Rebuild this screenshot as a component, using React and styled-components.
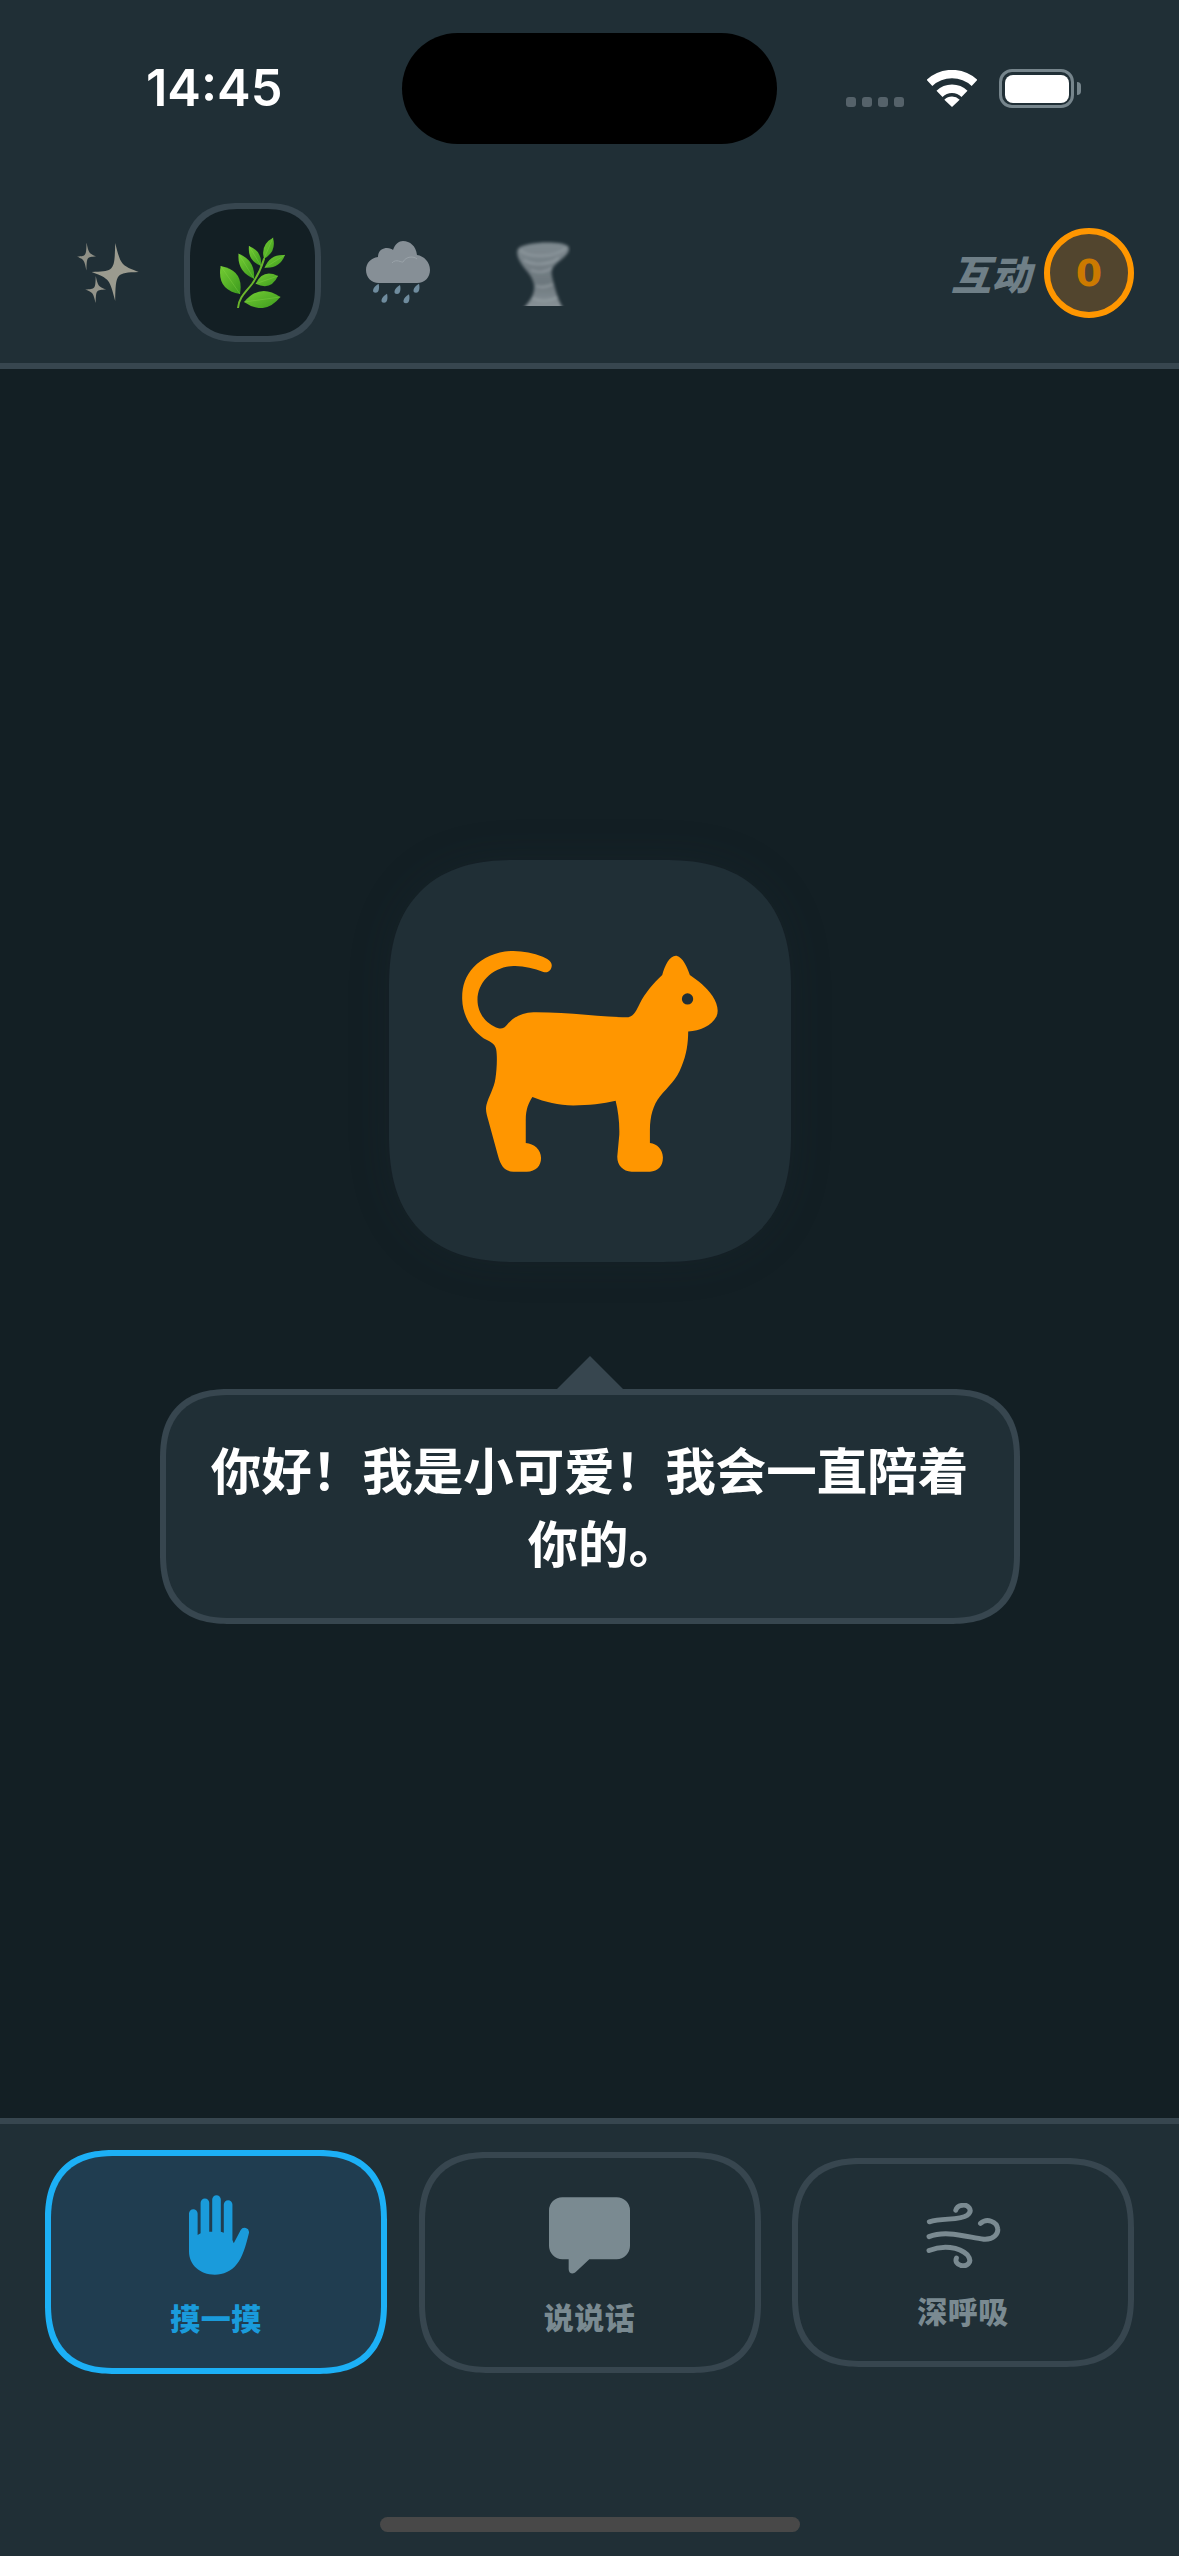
import React from "react";
import styled, { createGlobalStyle } from "styled-components";

const CJK = `"Noto Sans CJK SC", "Noto Sans", sans-serif`;

const Global = createGlobalStyle`
  html, body { margin: 0; padding: 0; background: #131f24; }
  * { box-sizing: border-box; }
`;

const Page = styled.div`
  width: 1179px;
  height: 2556px;
  display: flex;
  flex-direction: column;
  overflow: hidden;
  background: #131f24;
  font-family: ${CJK};
`;

const Header = styled.header`
  height: 369px;
  flex: none;
  background: #202f36;
  border-bottom: 6px solid #37464f;
  padding-top: 33px;
`;

const StatusBar = styled.div`
  display: grid;
  grid-template-columns: 402px 375px 1fr;
  height: 111px;
  align-items: center;
`;

const Time = styled.div`
  padding-left: 146px;
  font: 600 50.5px/1 Inter, sans-serif;
  color: #fff;
`;

const Island = styled.div`
  height: 111px;
  border-radius: 56px;
  background: #000;
`;

const StatusIcons = styled.div`
  display: flex;
  align-items: flex-start;
  padding-left: 69px;
  height: 39px;
`;

const Dots = styled.div`
  display: flex;
  gap: 6px;
  margin-top: 28px;
  margin-right: 23px;
`;

const Dot = styled.span`
  width: 10px;
  height: 10px;
  border-radius: 3px;
  background: #55626a;
`;

const Wifi = styled.svg`
  width: 50px;
  height: 37px;
  margin-top: 1px;
  margin-right: 22px;
`;

const Battery = styled.div`
  width: 75px;
  height: 39px;
  border: 3.5px solid #76858c;
  border-radius: 13px;
  padding: 2.5px;
`;

const BatteryFill = styled.div`
  width: 100%;
  height: 100%;
  border-radius: 8px;
  background: #fff;
`;

const BatteryNub = styled.div`
  width: 4px;
  height: 13px;
  margin: 13px 0 0 3px;
  border-radius: 0 5px 5px 0;
  background: #76858c;
`;

const TabRow = styled.div`
  display: flex;
  align-items: center;
  margin-top: 59px;
  padding: 0 45px 0 39px;
`;

const Tabs = styled.div`
  display: flex;
  gap: 8px;
  flex: 1;
`;

const Tab = styled.div`
  width: 137px;
  height: 139px;
  display: flex;
  align-items: center;
  justify-content: center;
  border-radius: 56px;
  corner-shape: superellipse(1.3);
  border: 6px solid ${(p) => (p.$active ? "#37464f" : "transparent")};
  background: ${(p) => (p.$active ? "#131f24" : "transparent")};
`;

const Score = styled.div`
  display: flex;
  align-items: center;
  gap: 13px;
`;

const ScoreLabel = styled.span`
  font-size: 40px;
  line-height: 48px;
  font-weight: 900;
  font-style: italic;
  color: #6f7f87;
`;

const ScoreBadge = styled.div`
  width: 90px;
  height: 90px;
  display: flex;
  align-items: center;
  justify-content: center;
  border-radius: 50%;
  border: 6.5px solid #ff9600;
  background: #52452e;
  color: #cc7a00;
  font: 700 38px/1 "DejaVu Sans", sans-serif;
`;

const Main = styled.main`
  flex: 1;
  display: flex;
  flex-direction: column;
  align-items: center;
  padding-top: 491px;
`;

const PetCard = styled.div`
  width: 402px;
  height: 402px;
  display: flex;
  align-items: center;
  justify-content: center;
  border-radius: 128px;
  corner-shape: superellipse(1.3);
  background: #202f36;
  box-shadow: 0 0 40px rgba(32, 47, 54, 0.22);
`;

const CatIcon = styled.svg`
  width: 260px;
  height: 223px;
`;

const Bubble = styled.div`
  position: relative;
  width: 860px;
  margin-top: 127px;
  padding: 37px 36px 41px;
  border: 6px solid #37464f;
  border-radius: 70px;
  corner-shape: superellipse(1.3);
  background: #202f36;
  color: #fff;
  font-size: 50.5px;
  line-height: 72.5px;
  font-weight: 700;
  text-align: center;
  &::before {
    content: "";
    position: absolute;
    left: 50%;
    top: -39px;
    margin-left: -33px;
    border-left: 33px solid transparent;
    border-right: 33px solid transparent;
    border-bottom: 33px solid #37464f;
  }
`;

const BubbleLine = styled.div`
  padding-left: ${(p) => (p.$trimmedEnd ? "0.55em" : "0")};
`;

const Footer = styled.footer`
  height: 438px;
  flex: none;
  position: relative;
  background: #202f36;
  border-top: 6px solid #37464f;
  padding: 26px 45px 0;
`;

const Actions = styled.div`
  display: grid;
  grid-template-columns: repeat(3, 342px);
  gap: 31.5px;
  align-items: center;
`;

const Action = styled.div`
  display: flex;
  flex-direction: column;
  align-items: center;
  gap: 24px;
  padding: 39px 0 33px;
  border-radius: 70px;
  corner-shape: superellipse(1.3);
  border: 6px solid ${(p) => (p.$active ? "#1cb0f6" : "#37464f")};
  background: ${(p) => (p.$active ? "#203d50" : "transparent")};
  color: ${(p) => (p.$active ? "#1a9bdb" : "#7a8a91")};
`;

const ActionIcon = styled.svg`
  display: block;
  width: ${(p) => p.$w}px;
  height: ${(p) => p.$h}px;
  margin-left: ${(p) => p.$shift || 0}px;
`;

const ActionLabel = styled.span`
  font-size: 30px;
  line-height: 36px;
  font-weight: 900;
  letter-spacing: 0.5px;
`;

const HomeBar = styled.div`
  position: absolute;
  left: 380px;
  bottom: 24px;
  width: 420px;
  height: 15px;
  border-radius: 8px;
  background: #484848;
`;

const star = (cx, cy, h, v) => {
  const near = 0.03;
  const far = 0.24;
  const arc = (sx, sy, ex, ey) => {
    const c1x = cx + (sx ? sx * h * near : ex * h * far);
    const c1y = cy + (sy ? sy * v * far : ey * v * near);
    const c2x = cx + (ex ? ex * h * far : sx * h * near);
    const c2y = cy + (ey ? ey * v * near : sy * v * far);
    return `C${c1x} ${c1y} ${c2x} ${c2y} ${cx + ex * h} ${cy + ey * v}`;
  };
  return `M${cx} ${cy - v}${arc(0, -1, 1, 0)}${arc(1, 0, 0, 1)}${arc(0, 1, -1, 0)}${arc(-1, 0, 0, -1)}Z`;
};

const Sparkles = () => (
  <svg width="62" height="60" viewBox="0 0 62 60">
    <path d={star(38.2, 29, 23.5, 29)} fill="#9b9b8f" />
    <path d={star(9.5, 13.5, 9.5, 14)} fill="#8f9086" />
    <path d={star(18.7, 46.5, 10.5, 13.5)} fill="#94948a" />
  </svg>
);

const leaf = ([tx, ty], [bx, by], w) => {
  const mx = (tx + bx) / 2;
  const my = (ty + by) / 2;
  const dx = bx - tx;
  const dy = by - ty;
  const len = Math.hypot(dx, dy);
  const nx = (-dy / len) * w;
  const ny = (dx / len) * w;
  return `M${bx} ${by}Q${mx + nx} ${my + ny} ${tx} ${ty}Q${mx - nx} ${my - ny} ${bx} ${by}Z`;
};

const LEAVES = [
  [[0.7, 29], [20, 57], 17],
  [[18.6, 16.7], [34, 41.7], 11],
  [[29, 9], [41, 29], 9],
  [[53, 0.7], [44, 21.7], 9],
  [[65, 18], [44.6, 30.7], 9],
  [[58, 39], [35.7, 46.7], 12],
  [[60.4, 60], [24.1, 65], 17],
];

const Herb = () => (
  <svg width="65" height="71" viewBox="0 0 65 71">
    <defs>
      <linearGradient id="herbLeaf" x1="0" y1="0" x2="1" y2="1">
        <stop offset="0" stopColor="#74cc33" />
        <stop offset="1" stopColor="#3c9a1e" />
      </linearGradient>
    </defs>
    <path d="M18 71C19 60 26 55 32 47C37 40 41 32 44 22" fill="none" stroke="#6bb52c" strokeWidth="2" strokeLinecap="round" />
    {LEAVES.map(([t, b, w], i) => (
      <g key={i}>
        <path d={leaf(t, b, w)} fill="url(#herbLeaf)" />
        <line x1={t[0]} y1={t[1]} x2={b[0]} y2={b[1]} stroke="#8ad94b" strokeOpacity="0.45" strokeWidth="0.8" />
      </g>
    ))}
  </svg>
);

const DROPS = [[9.6, 47.7], [31, 49], [50, 47.7], [18, 57.7], [40, 58.3]];

const RainCloud = () => (
  <svg width="64" height="63" viewBox="0 0 64 63">
    <path
      d="M13 42C5 42 0 36 0 29C0 22 5 17 12 16C12 9 17 7 21 7C24 7 26 8 27 9C29 3 33 0 37 0C44 0 50 5 51 14C58 15 64 21 64 29C64 36 59 42 51 42Z"
      fill="#868f96"
    />
    <path d="M26 22C30 17 36 22 37 21C40 15 48 15 51 18" fill="none" stroke="#9aa3a9" strokeWidth="1" />
    {DROPS.map(([x, y]) => (
      <path
        key={`${x}-${y}`}
        d={`M${x + 3} ${y - 5}C${x + 4} ${y - 1} ${x + 3.5} ${y + 4} ${x} ${y + 4}C${x - 4} ${y + 4} ${x - 3.5} ${y - 1} ${x + 3} ${y - 5}Z`}
        fill="#6f8c9e"
      />
    ))}
  </svg>
);

const Tornado = () => (
  <svg width="57" height="66" viewBox="0 0 57 66">
    <defs>
      <filter id="twisterBlur" x="-15%" y="-15%" width="130%" height="130%">
        <feGaussianBlur stdDeviation="1.5" />
      </filter>
      <linearGradient id="twisterFill" x1="0" y1="0" x2="0" y2="1">
        <stop offset="0" stopColor="#7f8a90" />
        <stop offset="0.6" stopColor="#6c777d" />
        <stop offset="1" stopColor="#8b959a" />
      </linearGradient>
      <clipPath id="twisterFloor">
        <rect x="-5" y="-5" width="67" height="71" />
      </clipPath>
    </defs>
    <g clipPath="url(#twisterFloor)">
      <g filter="url(#twisterBlur)">
        <path
          d="M4 9C8 2 46 0 54 6C58 12 49 18 42 24C35 30 38 36 40 44C42 52 44 60 50 70H8C13 64 19 58 20 50C21 42 17 36 12 30C7 24 1 15 4 9Z"
          fill="url(#twisterFill)"
        />
        <path d="M6 10C14 18 40 18 52 8M10 20C18 26 36 25 45 18M17 30C24 33 32 32 38 28M22 46C28 48 34 47 39 44M18 58C26 62 36 61 44 57" fill="none" stroke="#a3acb1" strokeWidth="1.6" opacity="0.65" />
      </g>
    </g>
  </svg>
);

const CAT =
  "M520 396C535 401 546 388 545 375C544 362 530 355 518 350C490 340 460 333 430 333C385 333 340 350 310 382C285 410 275 440 276 478C277 520 297 565 340 595C355 603 375 610 378 628C382 650 380 690 376 715C372 745 355 770 349 795C345 810 350 825 354 840L384 950C392 980 405 996 430 996H470C498 996 513 978 513 955C513 930 492 912 467 910V840C467 810 475 790 487 772C525 787 565 797 610 797C655 797 700 792 737 783C745 815 749 850 748 885L742 950C741 975 758 996 785 996H840C865 996 880 978 879 952C878 930 862 912 840 910V870C840 830 850 795 870 770C895 740 920 720 935 680C950 645 955 610 955 575C990 573 1025 558 1040 530C1048 512 1042 490 1028 468C1010 442 985 422 960 405C952 382 940 352 920 347C900 345 885 375 877 405C850 430 825 460 810 490C800 510 793 528 775 532C700 532 590 516 490 517C455 518 430 532 412 553C405 563 395 568 385 565C350 555 322 520 322 480C322 425 370 380 430 378C460 377 490 385 520 396Z";

const ACTIONS = [
  {
    label: "摸一摸",
    active: true,
    w: 60,
    h: 80,
    shift: 6,
    box: "87 45 181 240",
    icon: (
      <path
        fill="currentColor"
        d="M87 100A13 13 0 0 1 113 100V165L122 160V68A13 13 0 0 1 148 68V155H157V58A13 13 0 0 1 183 58V155L192 158V73A13 13 0 0 1 218 73V180L222 190L243 150A13.5 13.5 0 0 1 268 158C258 200 248 232 232 252C215 275 190 285 165 285C120 285 87 255 87 215Z"
      />
    ),
  },
  {
    label: "说说话",
    w: 81,
    h: 77,
    box: "87 52 243 230",
    icon: (
      <path
        fill="currentColor"
        d="M127 52H290A40 40 0 0 1 330 92V198A40 40 0 0 1 290 238H208L168 276C158 286 146 280 146 268V238H127A40 40 0 0 1 87 198V92A40 40 0 0 1 127 52Z"
      />
    ),
  },
  {
    label: "深呼吸",
    w: 75,
    h: 65,
    box: "1222 68 223 197",
    icon: (
      <g fill="none" stroke="currentColor" strokeWidth="15" strokeLinecap="round">
        <path d="M1230 125C1270 112 1320 122 1345 105C1365 88 1345 72 1330 75C1320 76 1312 82 1310 90" />
        <path d="M1229 170C1280 150 1340 170 1395 178C1425 180 1440 160 1437 145C1434 125 1405 112 1385 130" />
        <path d="M1229 212C1270 195 1320 200 1345 225C1365 250 1340 262 1325 257C1313 254 1308 245 1312 235" />
      </g>
    ),
  },
];

const GREETING_FIRST = "\u4F60\u597D\uFF01\u6211\u662F\u5C0F\u53EF\u7231\uFF01\u6211\u4F1A\u4E00\u76F4\u966A\u7740";
const GREETING_LAST = "\u4F60\u7684\u3002";

export default function App() {
  return (
    <Page>
      <Global />
      <Header>
        <StatusBar>
          <Time>14:45</Time>
          <Island />
          <StatusIcons>
            <Dots>
              <Dot />
              <Dot />
              <Dot />
              <Dot />
            </Dots>
            <Wifi viewBox="290 57 150 111">
              <g fill="none" stroke="#fff">
                <path strokeWidth="25" d="M297.5 95.6A99 99 0 0 1 432.5 95.6" />
                <path strokeWidth="26" d="M327.5 128.5A54 54 0 0 1 402.5 128.5" />
              </g>
              <path fill="#fff" d="M365 168L342 146A33 33 0 0 1 388 146Z" />
            </Wifi>
            <Battery>
              <BatteryFill />
            </Battery>
            <BatteryNub />
          </StatusIcons>
        </StatusBar>
        <TabRow>
          <Tabs>
            <Tab>
              <Sparkles />
            </Tab>
            <Tab $active>
              <Herb />
            </Tab>
            <Tab>
              <RainCloud />
            </Tab>
            <Tab>
              <Tornado />
            </Tab>
          </Tabs>
          <Score>
            <ScoreLabel>互动</ScoreLabel>
            <ScoreBadge>0</ScoreBadge>
          </Score>
        </TabRow>
      </Header>
      <Main>
        <PetCard>
          <CatIcon viewBox="270 330 780 670">
            <path fill="#ff9600" d={CAT} />
            <circle cx="953" cy="477" r="17" fill="#202f36" />
          </CatIcon>
        </PetCard>
        <Bubble>
          <BubbleLine>{GREETING_FIRST}</BubbleLine>
          <BubbleLine $trimmedEnd>{GREETING_LAST}</BubbleLine>
        </Bubble>
      </Main>
      <Footer>
        <Actions>
          {ACTIONS.map((a) => (
            <Action key={a.label} $active={a.active}>
              <ActionIcon $w={a.w} $h={a.h} $shift={a.shift} viewBox={a.box}>
                {a.icon}
              </ActionIcon>
              <ActionLabel>{a.label}</ActionLabel>
            </Action>
          ))}
        </Actions>
        <HomeBar />
      </Footer>
    </Page>
  );
}
